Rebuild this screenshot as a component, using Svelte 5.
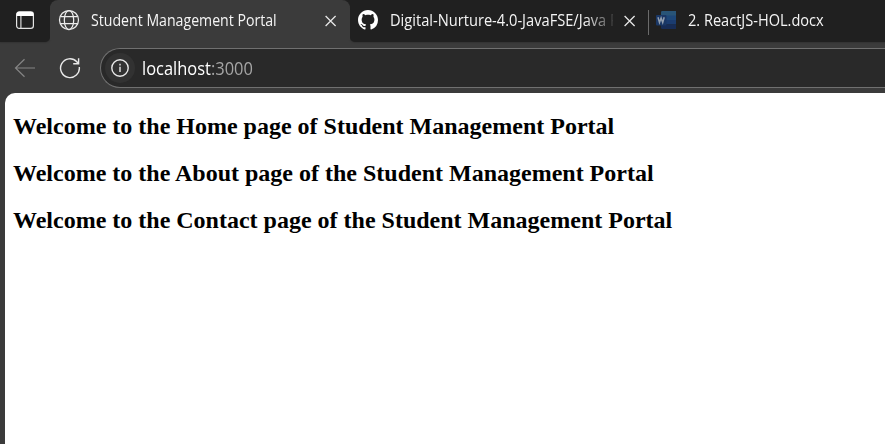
<script>
  const headings = [
    'Welcome to the Home page of Student Management Portal',
    'Welcome to the About page of the Student Management Portal',
    'Welcome to the Contact page of the Student Management Portal'
  ];
</script>

{#snippet cross()}
  <svg class="cross" width="12" height="12" viewBox="0 0 12 12" fill="none" stroke="#e6e6e6" stroke-width="1.3"><path d="M.6 1l10 10M10.6 1L.6 11" /></svg>
{/snippet}

<div class="browser">
  <div class="tabs">
    <div class="workspace">
      <svg width="20" height="20" viewBox="0 0 20 20" fill="none">
        <rect x="1.6" y="1.8" width="16.8" height="16.6" rx="2.6" stroke="#e4e4e4" stroke-width="1.2" />
        <path d="M1.6 6V4.4a2.6 2.6 0 0 1 2.6-2.6h11.6a2.6 2.6 0 0 1 2.6 2.6V6z" fill="#fff" />
        <path d="M5.9 6v12" stroke="#d8d8d8" stroke-width="1.2" />
      </svg>
    </div>
    <div class="tab active">
      <svg width="22" height="22" viewBox="0 0 22 22" fill="none" stroke="#ececec" stroke-width="1.25">
        <circle cx="11" cy="11" r="9.5" />
        <ellipse cx="11" cy="11" rx="4.7" ry="9.5" />
        <path d="M2.3 7.5h17.4M2.3 14.5h17.4" />
      </svg>
      <span class="title student"><span>Student Management Portal</span></span>
      {@render cross()}
    </div>
    <div class="others">
      <div class="tab github">
        <svg width="20" height="20" viewBox="0 0 16 16" fill="#fff"><path d="M8 0C3.58 0 0 3.58 0 8c0 3.54 2.29 6.53 5.47 7.59.4.07.55-.17.55-.38 0-.19-.01-.82-.01-1.49-2.01.37-2.53-.49-2.69-.94-.09-.23-.48-.94-.82-1.13-.28-.15-.68-.52-.01-.53.63-.01 1.08.58 1.23.82.72 1.21 1.87.87 2.33.66.07-.52.28-.87.51-1.07-1.78-.2-3.64-.89-3.64-3.95 0-.87.31-1.59.82-2.15-.08-.2-.36-1.02.08-2.12 0 0 .67-.21 2.2.82.64-.18 1.32-.27 2-.27s1.36.09 2 .27c1.53-1.04 2.2-.82 2.2-.82.44 1.1.16 1.92.08 2.12.51.56.82 1.27.82 2.15 0 3.07-1.87 3.75-3.65 3.95.29.25.54.73.54 1.48 0 1.07-.01 1.93-.01 2.2 0 .21.15.46.55.38A8.01 8.01 0 0 0 16 8c0-4.42-3.58-8-8-8z" /></svg>
        <span class="title repo"><span>Digital-Nurture-4.0-JavaFSE/Java F</span></span>
        {@render cross()}
      </div>
      <div class="tab word">
        <svg width="20" height="18" viewBox="0 0 20 18">
          <path d="M5 1.2Q5 0 6.2 0H20v5H5z" fill="#285477" />
          <path d="M5 4.5h15V9H5z" fill="#1d4779" />
          <path d="M5 9h15v4.5H5z" fill="#1b3c70" />
          <path d="M5 13.5h15V18H6.2Q5 18 5 16.8z" fill="#172c56" />
          <rect y="4" width="10.5" height="10.5" rx="1" fill="#1a3765" />
          <path d="M2 6.3l1.5 5.3 1.6-4.6 1.6 4.6 1.5-5.3" fill="none" stroke="#929eae" stroke-width="1.5" />
        </svg>
        <span class="title doc"><span>2. ReactJS-HOL.docx</span></span>
      </div>
    </div>
  </div>

  <div class="toolbar">
    <svg class="back" width="22" height="20" viewBox="0 0 22 20" fill="none" stroke="#858585" stroke-width="1.2"><path d="M10.5 1.2L1.5 10l9 8.8M1.5 10H21" /></svg>
    <svg class="reload" width="22" height="22" viewBox="0 0 22 22" fill="none" stroke="#e8e8e8" stroke-width="1.4"><path d="M20.3 10a9.4 9.4 0 1 1-2.5-5.3l1.2 1.5M19.6 1.3v5.4h-5.4" /></svg>
    <div class="address">
      <div class="info">
        <svg width="18" height="18" viewBox="0 0 18 18" fill="none" stroke="#e8e8e8" stroke-width="1.4"><circle cx="9" cy="9" r="8.2" /><path d="M9 7.8v5.2M9 4.8v1.7" /></svg>
      </div>
      <span class="url">localhost<span class="port">:3000</span></span>
    </div>
  </div>

  <main>
    {#each headings as heading}
      <h2>{heading}</h2>
    {/each}
  </main>
</div>

<style>
  :global(body) { overflow: hidden; background: #3b3b3b; }
  .browser { position: relative; z-index: 0; width: 885px; height: 444px; display: flex; flex-direction: column; overflow: hidden; background: #3b3b3b; font-family: 'Open Sans', 'Noto Sans', sans-serif; }
  .tabs { display: flex; height: 42px; flex: none; }
  .workspace { width: 50px; box-sizing: border-box; padding: 10px 0 0 15px; background: #202020; border-bottom-right-radius: 5px; box-shadow: 0 0 2px #222; }
  .tab { display: flex; align-items: center; height: 40px; box-sizing: border-box; }
  .tab svg { flex: none; }
  .active { width: 300px; padding-left: 8px; position: relative; background: #3b3b3b; border-radius: 8px 8px 0 0; }
  .active::before { content: ''; position: absolute; z-index: -1; inset: 0 0 34px; background: #202020; }
  .title { color: #f5f5f5; font-size: 16px; line-height: 22px; white-space: nowrap; overflow: hidden; flex: none; }
  .title > span { display: inline-block; transform-origin: left; }
  .student { width: 223px; margin: 0 11px; }
  .student > span { transform: scaleX(0.883); }
  .others { display: flex; flex: 1; background: #202020; border-bottom-left-radius: 5px; box-shadow: 0 0 2px #222; }
  .github { width: 298px; padding-left: 8px; position: relative; }
  .github::after { content: ''; position: absolute; right: -1px; top: 10px; width: 1px; height: 25px; background: #6b6b6b; }
  .repo { width: 223px; margin: 0 11px 0 12px; mask-image: linear-gradient(90deg, #000 195px, transparent 227px); }
  .repo > span { transform: scaleX(0.915); }
  .word { padding-left: 8px; }
  .doc { margin-left: 12px; }
  .doc > span { transform: scaleX(0.91); }
  .cross { margin-top: 1px; }
  .toolbar { display: flex; align-items: center; height: 51px; flex: none; }
  .back { margin-left: 14px; }
  .reload { margin-left: 23px; }
  .address { margin-left: 19px; flex: 1; height: 40px; box-sizing: border-box; border: 1px solid #707070; border-right: 0; border-radius: 20px 0 0 20px; background: #292929; display: flex; align-items: center; padding-left: 4px; }
  .info { width: 30px; height: 30px; border-radius: 50%; background: #323232; display: grid; place-items: center; }
  .url { margin-left: 7px; color: #fff; font-size: 18px; line-height: 24px; transform: scaleX(0.914); transform-origin: left; }
  .port { color: #a5a5a5; }
  main { flex: 1; margin-left: 5px; padding: 0 8px; border-top-left-radius: 10px; background: #fff; overflow: hidden; }
  h2 { margin: 20px 0; font: bold 24px/27px 'Liberation Serif', serif; color: #000; white-space: nowrap; }
</style>
